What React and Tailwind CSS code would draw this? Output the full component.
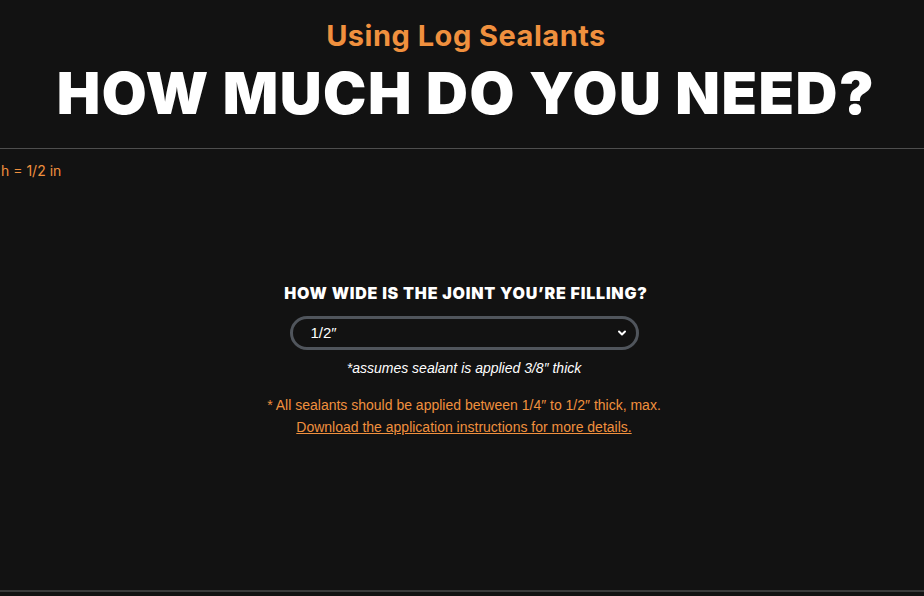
export default function App() {
  return (
    <div className="h-[596px] w-full bg-[#121212] overflow-hidden flex flex-col" style={{ fontFamily: '"Liberation Sans", Arial, sans-serif' }}>
      <header className="pt-[18px] pl-[8px] text-center" style={{ fontFamily: 'Inter, "Noto Sans", sans-serif' }}>
        <h2 className="text-[29px] leading-[36px] font-bold text-[#f0903e] tracking-[0.5px]">Using Log Sealants</h2>
        <h1 className="mt-[10px] text-[58px] leading-[58px] font-black text-white tracking-[1.5px]">HOW MUCH DO YOU NEED?</h1>
      </header>
      <div className="mt-[26px] h-px bg-[#4e4e4e]" />
      <div className="pt-[14px] pl-[1px] text-[14px] leading-[16px] text-[#f0903e]" style={{ fontFamily: 'Inter, "Noto Sans", sans-serif' }}>
        h = 1/2 in
      </div>
      <section className="mt-[105px] flex flex-col items-center pl-[4px]">
        <h3 className="pl-[4px] text-[16px] leading-[18px] font-black text-white uppercase tracking-[0.8px]" style={{ fontFamily: 'Inter, "Noto Sans", sans-serif' }}>
          How wide is the joint you’re filling?
        </h3>
        <div className="mt-[14px] w-[349px] h-[34px] rounded-full border-[3px] border-[#50555c] bg-[#121212] flex items-center justify-between pl-[18px] pr-[8px]">
          <span className="text-[15px] text-white">1/2″</span>
          <svg width="12" height="12" viewBox="0 0 24 24" fill="none" stroke="white" strokeWidth="4" strokeLinecap="round" strokeLinejoin="round">
            <path d="M6 9l6 6 6-6" />
          </svg>
        </div>
        <p className="mt-[9px] text-[14px] leading-[18px] italic text-white">*assumes sealant is applied 3/8″ thick</p>
        <div className="mt-[17px] text-center text-[14px] leading-[22px] text-[#f0903e]">
          <p>* All sealants should be applied between 1/4″ to 1/2″ thick, max.</p>
          <a href="#" className="underline">Download the application instructions for more details.</a>
        </div>
      </section>
      <div className="mt-auto mb-[4px] h-[2px] bg-[#3a3a3a]" />
    </div>
  );
}
